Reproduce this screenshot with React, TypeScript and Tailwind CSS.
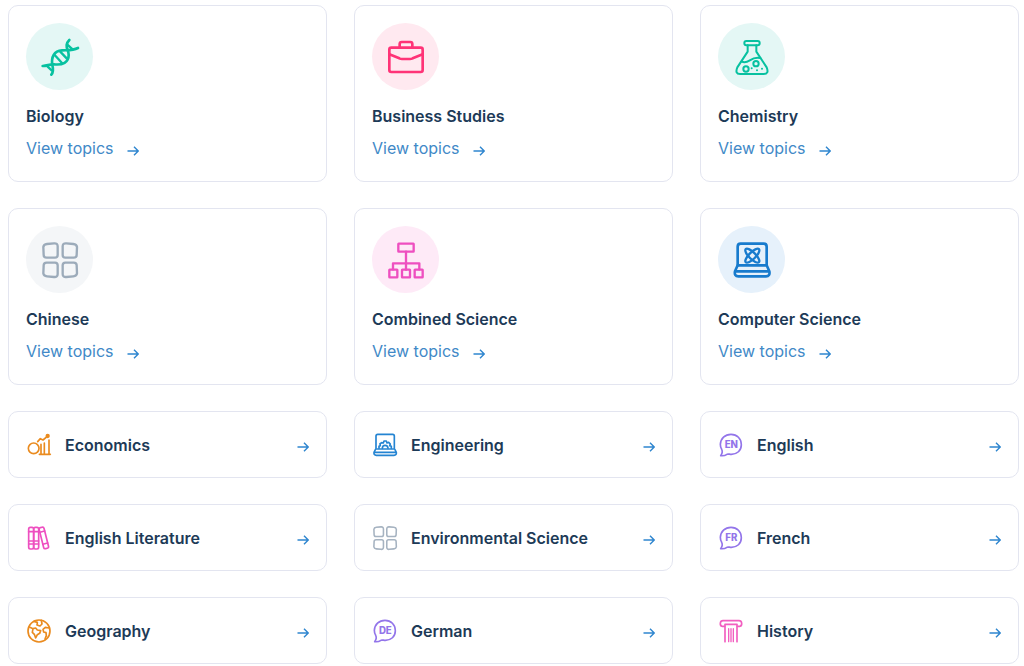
import type { ReactNode } from "react";

type IconProps = { className: string };

function Drawing({ box, width, className, children }: { box: number; width: number; className: string; children: ReactNode }) {
  return (
    <svg
      viewBox={`0 0 ${box} ${box}`}
      className={`shrink-0 overflow-visible ${className}`}
      fill="none"
      stroke="currentColor"
      strokeWidth={width}
      strokeLinecap="round"
      strokeLinejoin="round"
      aria-hidden="true"
    >
      {children}
    </svg>
  );
}

function Dna({ className }: IconProps) {
  return (
    <Drawing box={108} width={8} className={className}>
      <path d="M2 81C16 81 22 75 36 76C62 79 80 70 80 48C80 34 73 30 74 18C75 10 78 7 82 3" />
      <path d="M28 107C35 99 34 90 31 78C27 56 36 35 60 34C76 33 92 35 108 27" />
      <path d="M16 82L29 94M38 48L60 72M54 37L74 58M76 17L92 31" strokeWidth="7" />
    </Drawing>
  );
}

function Briefcase({ className }: IconProps) {
  return (
    <Drawing box={108} width={8} className={className}>
      <rect x="4" y="26" width="100" height="73" rx="6" />
      <path d="M35 25V15Q35 9 41 9H67Q73 9 73 15V25" />
      <path d="M4 46L34 58Q38 60 42 60H66Q70 60 74 58L104 46" />
    </Drawing>
  );
}

function Flask({ className }: IconProps) {
  return (
    <Drawing box={108} width={6} className={className}>
      <rect x="31" y="6" width="46" height="13" rx="6" />
      <path d="M41 19V38L10 85Q2 105 18 105H89Q106 105 98 85L67 38V19" />
      <path d="M23 68C46 78 48 50 79 57" />
      <circle cx="36" cy="90" r="8" />
      <circle cx="66" cy="74" r="8" />
      <g fill="currentColor" stroke="none">
        <circle cx="53" cy="88" r="3" />
        <circle cx="69" cy="94" r="3" />
        <circle cx="84" cy="89" r="3" />
      </g>
    </Drawing>
  );
}

const TILE = "M15 6L36 4Q47 3 47 13V39Q47 47 39 47H14Q5 47 5 39L4 15Q5 7 15 6Z";

function Tiles({ className }: IconProps) {
  return (
    <Drawing box={108} width={7} className={className}>
      <path d={TILE} />
      <path d={TILE} transform="matrix(-1 0 0 1 109 0)" />
      <path d={TILE} transform="matrix(1 0 0 -1 0 109)" />
      <path d={TILE} transform="matrix(-1 0 0 -1 109 109)" />
    </Drawing>
  );
}

function Hierarchy({ className }: IconProps) {
  return (
    <Drawing box={108} width={7} className={className}>
      <rect x="31" y="5" width="46" height="24" rx="1" />
      <path d="M54 29V83M15 82V64H94V82" />
      <rect x="4" y="83" width="24" height="23" rx="1" />
      <rect x="42" y="83" width="24" height="23" rx="1" />
      <rect x="80" y="83" width="24" height="23" rx="1" />
    </Drawing>
  );
}

function AtomLaptop({ className }: IconProps) {
  return (
    <Drawing box={108} width={8} className={className}>
      <path d="M11 70V14Q11 5 20 5H89Q98 5 98 14V70" />
      <path d="M11 70H98L106 88Q109 103 96 103H13Q0 103 3 88ZM4 88H105" />
      <ellipse cx="55" cy="41" rx="28" ry="10" strokeWidth="7" transform="rotate(45 55 41)" />
      <ellipse cx="55" cy="41" rx="28" ry="10" strokeWidth="7" transform="rotate(-45 55 41)" />
    </Drawing>
  );
}

function Growth({ className }: IconProps) {
  return (
    <Drawing box={72} width={5} className={className}>
      <circle cx="20" cy="46" r="16" />
      <path d="M37 64H70M42 34V63M52 30V63M66 21V63" />
      <path d="M32 26L40 17L48 21L61 10" />
      <circle cx="62" cy="9" r="4" fill="currentColor" />
    </Drawing>
  );
}

function GearLaptop({ className }: IconProps) {
  return (
    <Drawing box={72} width={5} className={className}>
      <path d="M9 46V9Q9 4 14 4H59Q64 4 64 9V46" />
      <path d="M8 48H65L70 58Q71 67 63 67H10Q2 67 3 58ZM4 58H69" />
      <path d="M18 46V40L22 38L21 32L26 29L31 30L33 24H40L42 30L47 28L52 33L50 38L55 40V46" />
      <path d="M28 46Q28 37 36 37Q45 37 45 46" />
    </Drawing>
  );
}

function Books({ className }: IconProps) {
  return (
    <Drawing box={72} width={5} className={className}>
      <rect x="5" y="4" width="15" height="65" rx="5" />
      <rect x="20" y="4" width="15" height="65" rx="5" />
      <path d="M5 17H35M5 45H35M5 54H35" />
      <g transform="rotate(-14 48 36)">
        <rect x="43" y="4" width="15" height="65" rx="5" />
        <path d="M43 17H58M43 54H58" />
      </g>
    </Drawing>
  );
}

function Globe({ className }: IconProps) {
  return (
    <Drawing box={72} width={5} className={className}>
      <circle cx="36" cy="36" r="33" />
      <path d="M7 24L18 29L26 27L31 33L41 35L38 43L31 47L26 57L22 46L16 40L18 29" />
      <path d="M21 7L31 10L30 18L39 21L45 15L43 4" />
      <path d="M67 27L55 25L48 31L50 39L57 41L58 50L54 60" />
    </Drawing>
  );
}

function Bubble({ code, className }: { code: string; className: string }) {
  return (
    <Drawing box={72} width={5} className={className}>
      <path d="M5 68C10 61 12 56 8 49C4 43 4 38 4 34C5 16 18 4 36 4C54 4 67 17 67 35C67 53 54 64 37 64C31 64 28 62 24 64C18 68 12 69 5 68Z" />
      <text
        x="37"
        y="45"
        textAnchor="middle"
        fill="currentColor"
        stroke="none"
        className="font-['Inter',sans-serif] text-[29px] font-extrabold"
      >
        {code}
      </text>
    </Drawing>
  );
}

function Column({ className }: IconProps) {
  return (
    <Drawing box={72} width={4} className={className}>
      <path d="M17 22H9Q3 20 4 12Q5 5 12 5H60Q67 5 68 12Q69 20 63 22H55" strokeWidth="5" />
      <path d="M18 68V16H54V68" strokeWidth="5" />
      <path d="M29 29V68M36 29V68M43 29V68" />
    </Drawing>
  );
}

function Arrow() {
  return (
    <svg viewBox="0 0 12 12" className="mt-[5px] size-3 shrink-0 text-[#2f86cf]" fill="none" stroke="currentColor" strokeWidth="1.4" aria-hidden="true">
      <path d="M0.5 6H11M7 1.8L11.2 6L7 10.2" />
    </svg>
  );
}

const featured = [
  { name: "Biology", tint: "bg-[#e4f7f5] text-[#07c1a0]", icon: <Dna className="size-9" /> },
  { name: "Business Studies", tint: "bg-[#ffe9f0] text-[#ff3377]", icon: <Briefcase className="size-9" /> },
  { name: "Chemistry", tint: "bg-[#e4f7f5] text-[#07c1a0]", icon: <Flask className="size-9" /> },
  { name: "Chinese", tint: "bg-[#f4f6f8] text-[#9cabba]", icon: <Tiles className="size-9" /> },
  { name: "Combined Science", tint: "bg-[#feeaf7] text-[#ee4fc0]", icon: <Hierarchy className="size-9" /> },
  { name: "Computer Science", tint: "bg-[#e6f1fb] text-[#187bcd]", icon: <AtomLaptop className="size-9" /> },
];

const subjects = [
  { name: "Economics", icon: <Growth className="size-6 text-[#ea8b1f]" /> },
  { name: "Engineering", icon: <GearLaptop className="size-6 text-[#2484d2]" /> },
  { name: "English", icon: <Bubble code="EN" className="size-6 text-[#9375ea]" /> },
  { name: "English Literature", icon: <Books className="size-6 text-[#ee4fc0]" /> },
  { name: "Environmental Science", icon: <Tiles className="size-6 text-[#a6b3c1]" /> },
  { name: "French", icon: <Bubble code="FR" className="size-6 text-[#9375ea]" /> },
  { name: "Geography", icon: <Globe className="size-6 text-[#ea8b1f]" /> },
  { name: "German", icon: <Bubble code="DE" className="size-6 text-[#9375ea]" /> },
  { name: "History", icon: <Column className="size-6 text-[#f25fc0]" /> },
];

export default function App() {
  return (
    <main className="grid grid-cols-3 gap-x-[27px] gap-y-[26px] bg-white pt-[5px] pr-[5px] pb-[2px] pl-2 font-['Inter',sans-serif] text-base text-[#1d3a57]">
      {featured.map((subject) => (
        <a key={subject.name} href="#" className="rounded-[10px] border border-[#e3e5f0] px-[17px] pt-[17px] pb-[21px]">
          <span className={`flex size-[67px] items-center justify-center rounded-full ${subject.tint}`}>{subject.icon}</span>
          <h2 className="mt-[14px] leading-6 font-semibold">{subject.name}</h2>
          <span className="mt-2 flex items-center gap-[14px] leading-6 text-[#4189c7]">
            View topics
            <Arrow />
          </span>
        </a>
      ))}
      {subjects.map((subject) => (
        <a key={subject.name} href="#" className="flex h-[67px] items-center rounded-[10px] border border-[#e3e5f0] pr-[17px] pl-[18px]">
          {subject.icon}
          <h2 className="ml-[14px] flex-1 leading-6 font-semibold">{subject.name}</h2>
          <Arrow />
        </a>
      ))}
    </main>
  );
}
